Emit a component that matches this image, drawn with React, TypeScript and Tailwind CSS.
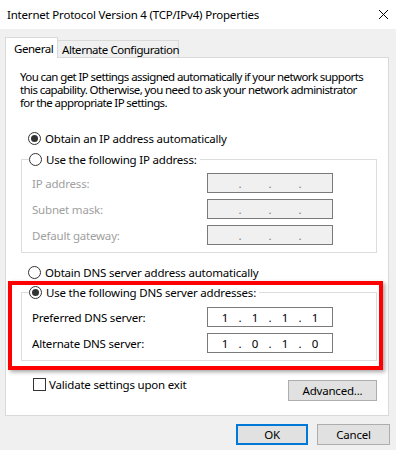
const Radio: React.FC<{ checked?: boolean }> = ({ checked }) => {
  return (
    <span className="flex h-[13px] w-[13px] shrink-0 items-center justify-center rounded-full border border-[#333333] bg-white">
      {checked && <span className="h-[7px] w-[7px] rounded-full bg-[#333333]" />}
    </span>
  );
};

const IpField: React.FC<{ octets?: string[]; disabled?: boolean }> = ({
  octets = ["", "", "", ""],
  disabled,
}) => {
  return (
    <div
      className={
        disabled
          ? "flex h-[20px] w-[126px] items-center border border-[#7a7a7a] bg-[#f0f0f0] pl-[5px] text-[#7a7a7a]"
          : "flex h-[20px] w-[126px] items-center border border-[#7a7a7a] bg-white pl-[5px] text-black"
      }
    >
      {octets.map((o, i) => (
        <div key={i} className="flex">
          <span className="w-[24px] text-center">{o}</span>
          {i < 3 && <span className="w-[6px] text-center">.</span>}
        </div>
      ))}
    </div>
  );
};

const Row: React.FC<{ label: string; disabled?: boolean; octets?: string[] }> = ({
  label,
  disabled,
  octets,
}) => {
  return (
    <div className="flex items-center">
      <span className={disabled ? "w-[175px] text-[#a0a0a0]" : "w-[175px] text-black"}>
        {label}
      </span>
      <IpField octets={octets} disabled={disabled} />
    </div>
  );
};

export default function App() {
  return (
    <div className="relative h-[450px] w-[396px] overflow-hidden whitespace-nowrap bg-[#f0f0f0] font-['Noto_Sans',sans-serif] text-[11.5px] leading-[13px] tracking-[-0.2px] text-black">
      {/* title bar */}
      <div className="flex h-[29px] items-center bg-white pl-[7px] pr-[8px]">
        <span>Internet Protocol Version 4 (TCP/IPv4) Properties</span>
        <svg className="ml-auto" width="9" height="9" viewBox="0 0 9 9">
          <path d="M0 0L9 9M9 0L0 9" stroke="#000" strokeWidth="1" />
        </svg>
      </div>

      {/* tabs */}
      <div className="flex h-[28px] items-end pl-[5px] tracking-[-0.45px]">
        <div className="relative z-10 -mb-px flex h-[21px] w-[53px] items-center border border-b-0 border-[#d9d9d9] bg-white pl-[8px]">
          General
        </div>
        <div className="flex h-[17px] w-[121px] items-center border border-b-0 border-l-0 border-[#d9d9d9] bg-[#f0f0f0] pl-[4px]">
          Alternate Configuration
        </div>
      </div>

      {/* panel */}
      <div className="ml-[5px] h-[359px] w-[384px] border border-[#d9d9d9] bg-white">
        <p className="pl-[14px] pt-[12px] tracking-[-0.6px]">
          You can get IP settings assigned automatically if your network supports
          <br />
          this capability. Otherwise, you need to ask your network administrator
          <br />
          for the appropriate IP settings.
        </p>

        <div className="ml-[22px] mt-[23px] flex items-center gap-[4px]">
          <Radio checked />
          <span>Obtain an IP address automatically</span>
        </div>

        <fieldset className="ml-[15px] mt-[8px] w-[356px] border border-[#dcdcdc] pl-[10px]">
          <legend className="-ml-[3px] flex items-center gap-[4px] bg-white pr-[3px]">
            <Radio />
            <span>Use the following IP address:</span>
          </legend>
          <div className="flex flex-col gap-[6px] pb-[7px] pt-[7px]">
            <Row label="IP address:" disabled />
            <Row label="Subnet mask:" disabled />
            <Row label="Default gateway:" disabled />
          </div>
        </fieldset>

        <div className="ml-[22px] mt-[13px] flex items-center gap-[4px]">
          <Radio />
          <span>Obtain DNS server address automatically</span>
        </div>

        <fieldset className="ml-[15px] mt-[7px] w-[356px] border border-[#dcdcdc] pl-[10px]">
          <legend className="-ml-[3px] flex items-center gap-[4px] bg-white pr-[3px]">
            <Radio checked />
            <span>Use the following DNS server addresses:</span>
          </legend>
          <div className="flex flex-col gap-[6px] pb-[7px] pt-[8px]">
            <Row label="Preferred DNS server:" octets={["1", "1", "1", "1"]} />
            <Row label="Alternate DNS server:" octets={["1", "0", "1", "0"]} />
          </div>
        </fieldset>

        <div className="mt-[16px] flex items-start justify-between pl-[27px] pr-[11px]">
          <div className="flex items-center gap-[3px] pt-px">
            <span className="h-[13px] w-[13px] border border-[#333333] bg-white" />
            <span>Validate settings upon exit</span>
          </div>
          <button className="mt-[3px] h-[21px] w-[89px] border border-[#adadad] bg-[#e1e1e1] text-center">
            Advanced...
          </button>
        </div>
      </div>

      {/* dialog buttons */}
      <div className="mt-[8px] flex justify-end gap-[9px] pr-[6px]">
        <button className="h-[21px] w-[72px] border-2 border-[#0078d7] bg-[#e1e1e1] text-center">
          OK
        </button>
        <button className="h-[21px] w-[73px] border border-[#adadad] bg-[#e1e1e1] text-center">
          Cancel
        </button>
      </div>

      {/* red highlight annotation */}
      <div className="absolute left-[8px] top-[281px] h-[89px] w-[375px] border-4 border-[#ff0000] shadow-[2px_2px_4px_rgba(0,0,0,0.35)]" />
    </div>
  );
}
